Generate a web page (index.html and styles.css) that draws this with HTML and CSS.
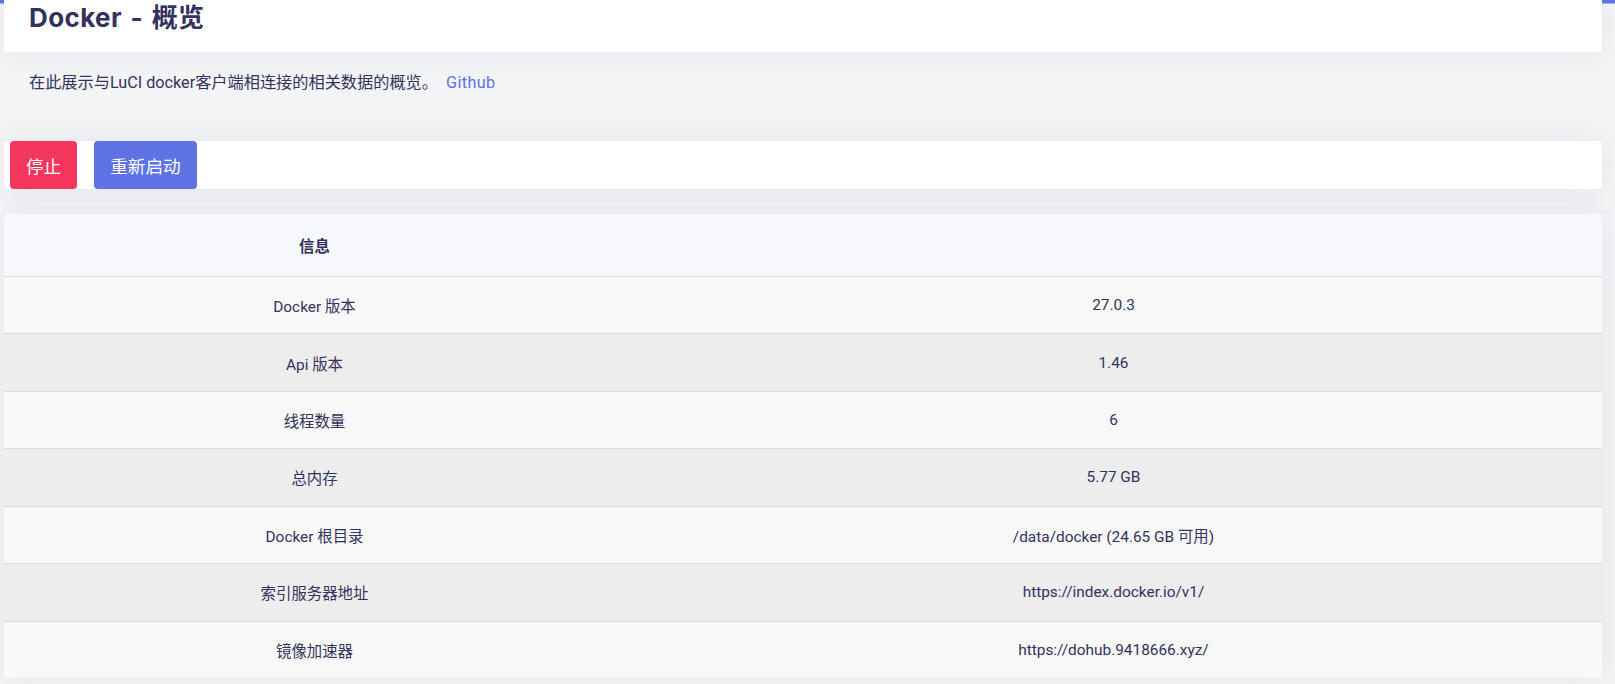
FILE: index.html
```html
<!DOCTYPE html>
<html lang="zh-CN">
<head>
<meta charset="utf-8">
<title>Docker - 概览</title>
<link rel="stylesheet" href="styles.css">
</head>
<body>
<div class="page">
  <div class="card header-card">
    <h2 class="title">Docker - 概览</h2>
  </div>
  <p class="desc">在此展示与LuCI docker客户端相连接的相关数据的概览。 <a class="link" href="#">Github</a></p>
  <div class="card action-card">
    <button class="btn btn-red">停止</button>
    <button class="btn btn-blue">重新启动</button>
  </div>
  <div class="card table-card">
    <table class="info">
      <thead>
        <tr><th class="c1">信息</th><th class="c2"></th></tr>
      </thead>
      <tbody>
        <tr><td>Docker 版本</td><td>27.0.3</td></tr>
        <tr><td>Api 版本</td><td>1.46</td></tr>
        <tr><td>线程数量</td><td>6</td></tr>
        <tr><td>总内存</td><td>5.77 GB</td></tr>
        <tr><td>Docker 根目录</td><td>/data/docker (24.65 GB 可用)</td></tr>
        <tr><td>索引服务器地址</td><td>https://index.docker.io/v1/</td></tr>
        <tr><td>镜像加速器</td><td>https://dohub.9418666.xyz/</td></tr>
      </tbody>
    </table>
  </div>
</div>
</body>
</html>
```
FILE: styles.css
```css
* { box-sizing: border-box; }
html, body { margin: 0; padding: 0; }
body {
  background: linear-gradient(#5e72e4, #5e72e4) top left / 100% 3.5px no-repeat, #f3f4f6;
  font-family: "Roboto", "Noto Sans CJK SC", sans-serif;
  color: #32325d;
  width: 1615px;
  height: 684px;
  overflow: hidden;
}
.page {
  padding: 0 13px 0 4px;
}
.card {
  background: #fff;
  border-radius: 4px;
  box-shadow: 0 0 2rem 0 rgba(136, 152, 170, 0.15);
}
.header-card {
  border-radius: 0 0 4px 4px;
  padding: 0 0 17px 25px;
  height: 52px;
}
.title {
  margin: 0;
  font-family: "Inter", "Noto Sans CJK SC", sans-serif;
  font-size: 26px;
  line-height: 35px;
  font-weight: 700;
  letter-spacing: 0.4px;
  word-spacing: 2px;
  color: #32325d;
}
.desc {
  margin: 20px 0 0;
  padding-left: 25px;
  font-size: 16.2px;
  line-height: 22px;
  color: #32325d;
}
.link {
  color: #5e72e4;
  text-decoration: none;
  margin-left: 4px;
  letter-spacing: 0.4px;
}
.action-card {
  margin-top: 47px;
  height: 48px;
  padding: 0 6px;
  display: flex;
  gap: 17px;
}
.btn {
  border: none;
  border-radius: 4px;
  height: 48px;
  padding: 0 16px;
  font-family: "Roboto", "Noto Sans CJK SC", sans-serif;
  font-size: 17.6px;
  color: #fff;
}
.btn-red { background: #f5365c; }
.btn-blue { background: #5e72e4; }
.table-card {
  margin-top: 25px;
  overflow: hidden;
}
.info {
  width: 100%;
  border-collapse: separate;
  border-spacing: 0;
  font-size: 15.4px;
}
.info th {
  height: 62px;
  background: #f6f8fb;
  font-weight: 700;
  text-align: center;
  padding: 0;
}
.info .c1 { width: 38.86%; }
.info td {
  height: 57.43px;
  text-align: center;
  padding: 0;
  border-top: 1px solid #dcdcdc;
  background: #f8f8f8;
}
.info tbody tr:first-child td { border-top-color: #e2dadc; }
.info tbody tr:nth-child(even) td { background: #ededed; }
```
